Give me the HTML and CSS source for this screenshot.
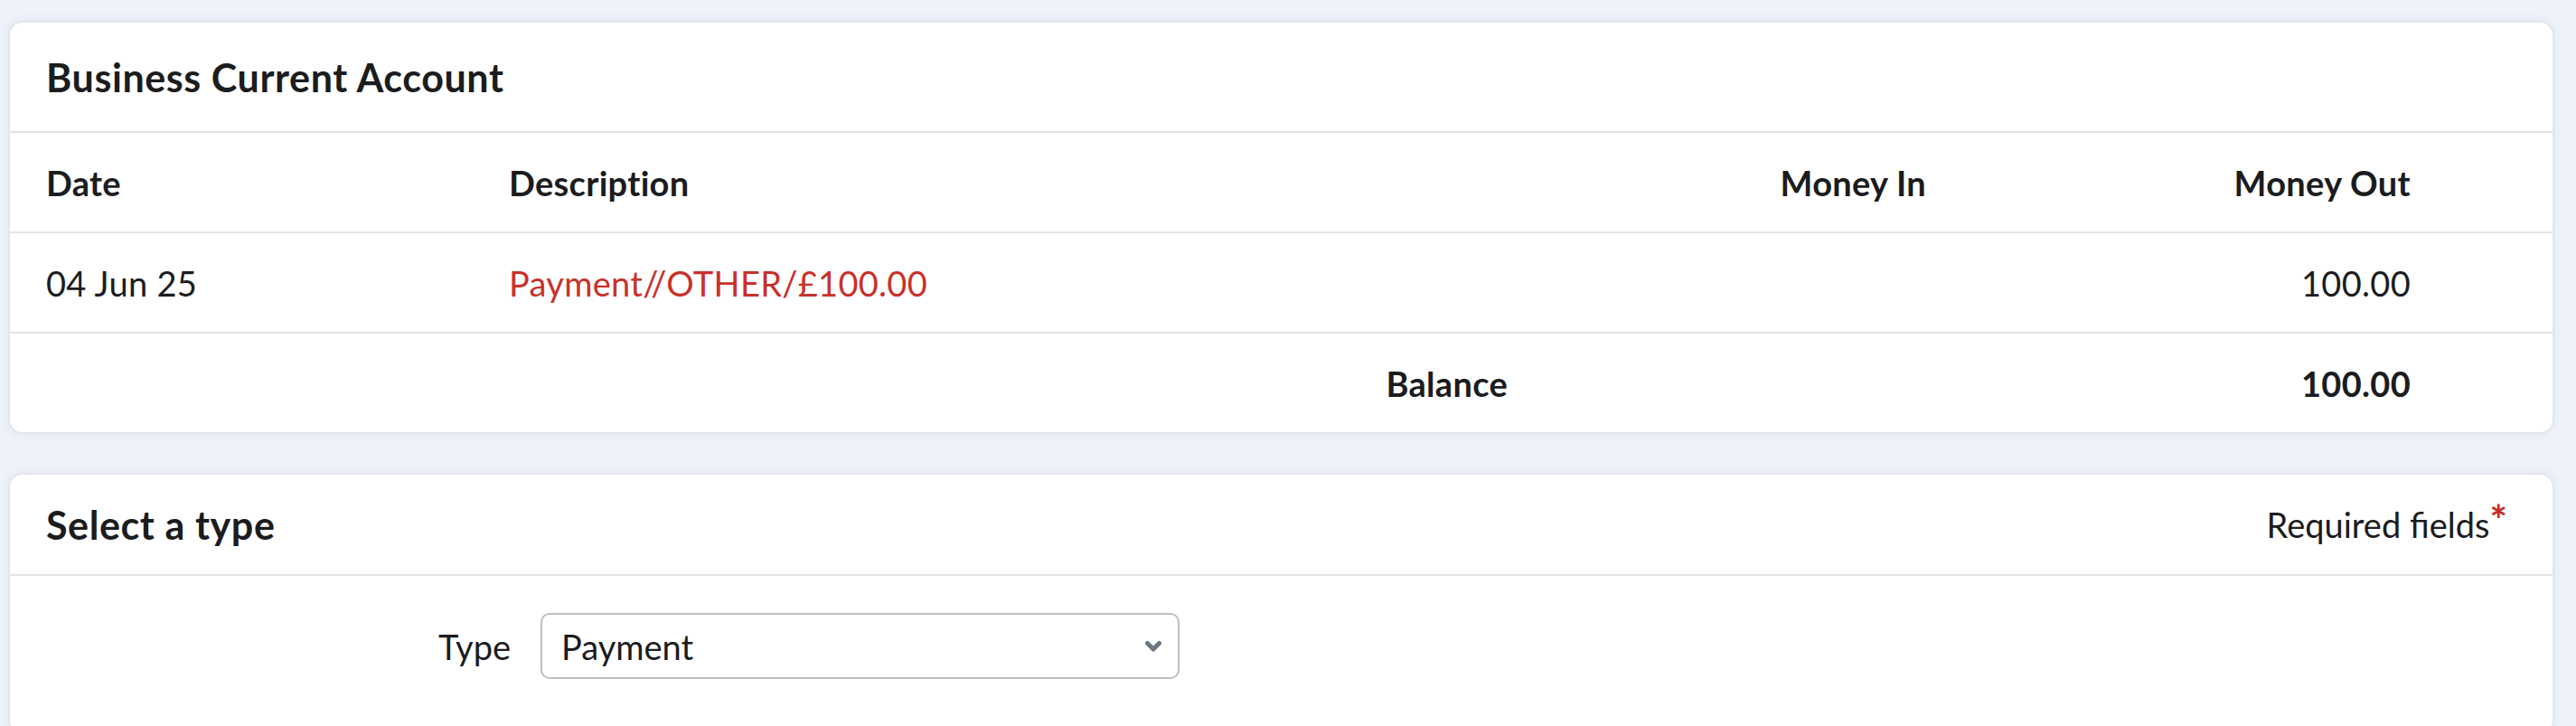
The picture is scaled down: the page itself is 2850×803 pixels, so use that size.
FILE: index.html
```html
<!DOCTYPE html>
<html lang="en">
<head>
<meta charset="utf-8">
<title>Business Current Account</title>
<link rel="stylesheet" href="styles.css">
</head>
<body>
<main class="page">
  <section class="card">
    <header class="card-header">
      <h2 class="card-title">Business Current Account</h2>
    </header>
    <div class="table">
      <div class="row head">
        <div class="cell">Date</div>
        <div class="cell">Description</div>
        <div class="cell num">Money In</div>
        <div class="cell num">Money Out</div>
        <div class="cell"></div>
      </div>
      <div class="row">
        <div class="cell">04 Jun 25</div>
        <div class="cell link">Payment//OTHER/£100.00</div>
        <div class="cell num"></div>
        <div class="cell num">100.00</div>
        <div class="cell"></div>
      </div>
      <div class="row total">
        <div class="cell"></div>
        <div class="cell num strong">Balance</div>
        <div class="cell num"></div>
        <div class="cell num strong">100.00</div>
        <div class="cell"></div>
      </div>
    </div>
  </section>

  <section class="card card-form">
    <header class="card-header split">
      <h2 class="card-title">Select a type</h2>
      <span class="required">Required fields<sup class="star">*</sup></span>
    </header>
    <div class="form-body">
      <div class="field">
        <label class="field-label">Type</label>
        <div class="select">
          <span class="select-value">Payment</span>
          <svg class="chevron" width="20" height="13" viewBox="0 0 20 13" aria-hidden="true">
            <polyline points="3.5,3.5 10,10 16.5,3.5" fill="none" stroke="#6b7782" stroke-width="5" stroke-linecap="round" stroke-linejoin="round"/>
          </svg>
        </div>
      </div>
    </div>
  </section>
</main>
</body>
</html>
```

FILE: styles.css
```css
* {
  box-sizing: border-box;
}

html, body {
  margin: 0;
  padding: 0;
}

body {
  background: #eef2f9;
  font-family: "Lato", "Inter", "Liberation Sans", sans-serif;
  color: #1b1c1e;
  height: 803px;
  overflow: hidden;
}

.page {
  padding: 23px 24px 0 9px;
  display: flex;
  flex-direction: column;
  gap: 43px;
}

.card {
  background: #ffffff;
  border: 2px solid #e3e5ea;
  border-radius: 16px;
  box-shadow: 0 0 10px rgba(190, 200, 220, 0.25);
}

.card-header {
  height: 122px;
  border-bottom: 2px solid #e3e4e9;
  display: flex;
  align-items: center;
  padding: 0 40px;
}

.card-header.split {
  height: 112px;
  justify-content: space-between;
  padding-right: 50px;
}

.card-title {
  margin: 0;
  font-size: 43px;
  font-weight: 700;
  letter-spacing: 0.6px;
}

.table {
  display: flex;
  flex-direction: column;
}

.row {
  display: grid;
  grid-template-columns: 512px 1105px 463px 536px 1fr;
  align-items: center;
  height: 111px;
  border-bottom: 2px solid #e3e4e9;
  padding-left: 40px;
  font-size: 38px;
  letter-spacing: 0.3px;
}

.row.total {
  border-bottom: none;
  height: 109px;
}

.row.head .cell,
.cell.strong {
  font-weight: 700;
}

.cell.num {
  text-align: right;
}

.cell.link {
  color: #c8312a;
}

.required {
  font-size: 38px;
  font-weight: 400;
}

.star {
  color: #c62b26;
  font-size: 46px;
  font-weight: 700;
  vertical-align: 0;
  position: relative;
  top: -3px;
  margin-left: 0;
  line-height: 0;
}

.form-body {
  padding: 41px 0 60px;
}

.field {
  display: flex;
  align-items: center;
  gap: 33px;
}

.field-label {
  width: 554px;
  text-align: right;
  font-size: 38px;
}

.select {
  width: 707px;
  height: 73px;
  border: 2px solid #b9c0c6;
  border-radius: 10px;
  display: flex;
  align-items: center;
  justify-content: space-between;
  padding: 0 17px 0 21px;
  font-size: 38px;
  background: #ffffff;
}

.chevron {
  display: block;
}
```
